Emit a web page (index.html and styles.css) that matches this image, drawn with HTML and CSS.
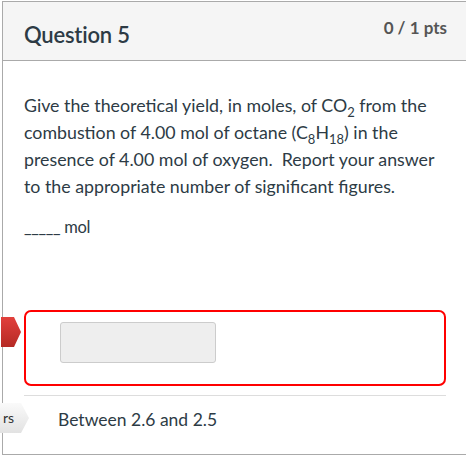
FILE: index.html
```html
<!DOCTYPE html>
<html lang="en">
<head>
  <meta charset="UTF-8">
  <title>Question 5</title>
  <link rel="stylesheet" href="styles.css">
</head>
<body>
  <div class="question">
    <div class="header">
      <span class="name">Question 5</span>
      <span class="points">0 / 1 pts</span>
    </div>

    <div class="text">
      <p>Give the theoretical yield, in moles, of CO<sub>2</sub> from the combustion of 4.00 mol of octane (C<sub>8</sub>H<sub>18</sub>) in the presence of 4.00 mol of oxygen.&nbsp; Report your answer to the appropriate number of significant figures.</p>
      <p class="blank">_____ mol</p>
    </div>

    <div class="answers">
      <div class="answer wrong">
        <span class="flag flag-red"></span>
        <div class="answer-box">
          <div class="input"></div>
        </div>
      </div>
      <div class="answer correct">
        <span class="flag flag-gray">rs</span>
        <div class="answer-text">Between 2.6 and 2.5</div>
      </div>
    </div>
  </div>
</body>
</html>
```

FILE: styles.css
```css
html, body {
  margin: 0;
  padding: 0;
  overflow: hidden;
  background-color: white;
}

body {
  font-family: Lato, 'Open Sans', sans-serif;
  color: #2d3b45;
}

.question {
  width: 500px;
  margin: 1px 0 0 2px;
  border: 1px solid #aaa;
  height: 454px;
  box-sizing: border-box;
}

.header {
  height: 59px;
  background-color: #f5f5f5;
  border-bottom: 1px solid #aaa;
  display: flex;
  align-items: center;
  padding: 0 0 0 21px;
  width: 463px;
  box-sizing: border-box;
  justify-content: space-between;
}

.header .name {
  font-size: 22px;
  font-weight: 600;
  letter-spacing: -0.2px;
  margin-top: 6px;
}

.header .points {
  font-size: 17px;
  font-weight: bold;
  color: #555;
  padding-right: 19px;
  margin-top: -7px;
}

.text {
  padding: 31px 0 0 21px;
  width: 418px;
  font-size: 17.8px;
  line-height: 27px;
}

.text p {
  margin: 0 0 14px;
}

.text .blank {
  font-size: 16.5px;
  letter-spacing: -0.3px;
}

.text sub {
  font-size: 13px;
  line-height: 0;
}

.answers {
  margin: 69px 0 0 21px;
  width: 422px;
}

.answer {
  position: relative;
}

.answer.wrong {
  padding-bottom: 9px;
  border-bottom: 1px solid #ddd;
}

.answer-box {
  height: 76px;
  border: 2px solid #f00;
  border-radius: 7px;
  box-sizing: border-box;
  padding: 10px 0 0 34px;
}

.input {
  width: 156px;
  height: 41px;
  background-color: #eee;
  border: 1px solid #ccc;
  border-radius: 3px;
  box-sizing: border-box;
}

.flag {
  position: absolute;
  left: -23px;
  height: 30px;
  font-size: 14px;
  line-height: 30px;
}

.flag-red {
  top: 7px;
  width: 20px;
  background: linear-gradient(#e2403c, #b52a24);
  clip-path: polygon(0 0, 13px 0, 20px 50%, 13px 100%, 0 100%);
}

.flag-gray {
  top: 7px;
  left: -26px;
  width: 31px;
  background: linear-gradient(#fafafa, #e2e2e2);
  clip-path: polygon(0 0, 23px 0, 31px 50%, 23px 100%, 0 100%);
  color: #333;
  text-align: right;
  padding-right: 15px;
  box-sizing: border-box;
}

.answer-text {
  padding: 14px 0 0 34px;
  font-size: 17.5px;
  line-height: 20px;
}
```
